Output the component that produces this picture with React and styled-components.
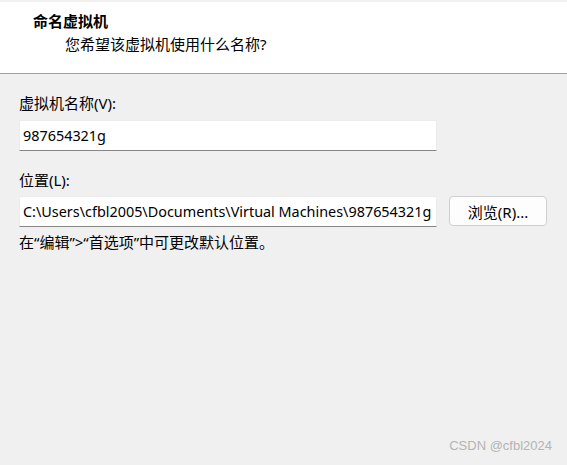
import React from 'react';
import styled, { createGlobalStyle } from 'styled-components';

const GlobalStyle = createGlobalStyle`
  html, body {
    margin: 0;
    padding: 0;
    background: #f0f0f0;
  }
  body {
    font-family: "Noto Sans", "Noto Sans CJK SC", sans-serif;
    font-size: 15px;
    color: #000;
  }
`;

const Page = styled.div`
  position: relative;
  min-height: 100vh;
  padding-top: 2px;
  box-sizing: border-box;
`;

const Header = styled.div`
  background: #fff;
  height: 72px;
  border-bottom: 1px solid #a0a0a0;
  padding: 9px 0 0 33px;
  box-sizing: border-box;
`;

const Title = styled.div`
  font-weight: bold;
  line-height: 20px;
`;

const Subtitle = styled.div`
  margin: 3px 0 0 32px;
  line-height: 20px;
`;

const Body = styled.div`
  padding: 19px 19px 0;
  display: flex;
  flex-direction: column;
`;

const Label = styled.div`
  line-height: 20px;
  margin-top: ${p => p.$gap || 0}px;
`;

const Row = styled.div`
  display: flex;
  align-items: flex-start;
  gap: 12px;
  margin-top: ${p => p.$gap ?? 7}px;
`;

const Field = styled.div`
  width: 418px;
  height: 31px;
  box-sizing: border-box;
  background: #fff;
  border: 1px solid #ececec;
  border-bottom: 1px solid #868686;
  padding: 0 3px;
  display: flex;
  align-items: center;
  white-space: nowrap;
  overflow: hidden;
  font-size: 14.4px;
`;

const Button = styled.button`
  width: 98px;
  height: 30px;
  box-sizing: border-box;
  background: #fdfdfd;
  border: 1px solid #d0d0d0;
  border-radius: 4px;
  font: inherit;
  color: #000;
  padding: 0;
`;

const Hint = styled.div`
  line-height: 20px;
  margin-top: 5px;
`;

const Watermark = styled.div`
  position: absolute;
  right: 15px;
  top: 438px;
  font-family: "Liberation Sans", Arial, sans-serif;
  font-size: 13px;
  color: #b4b4b4;
`;

export default function App() {
  return (
    <Page>
      <GlobalStyle />
      <Header>
        <Title>命名虚拟机</Title>
        <Subtitle>您希望该虚拟机使用什么名称?</Subtitle>
      </Header>
      <Body>
        <Label>虚拟机名称(V):</Label>
        <Row>
          <Field>987654321g</Field>
        </Row>
        <Label $gap={19}>位置(L):</Label>
        <Row $gap={6}>
          <Field>C:\Users\cfbl2005\Documents\Virtual Machines\987654321g</Field>
          <Button>浏览(R)...</Button>
        </Row>
        <Hint>在“编辑”&gt;“首选项”中可更改默认位置。</Hint>
      </Body>
      <Watermark>CSDN @cfbl2024</Watermark>
    </Page>
  );
}
